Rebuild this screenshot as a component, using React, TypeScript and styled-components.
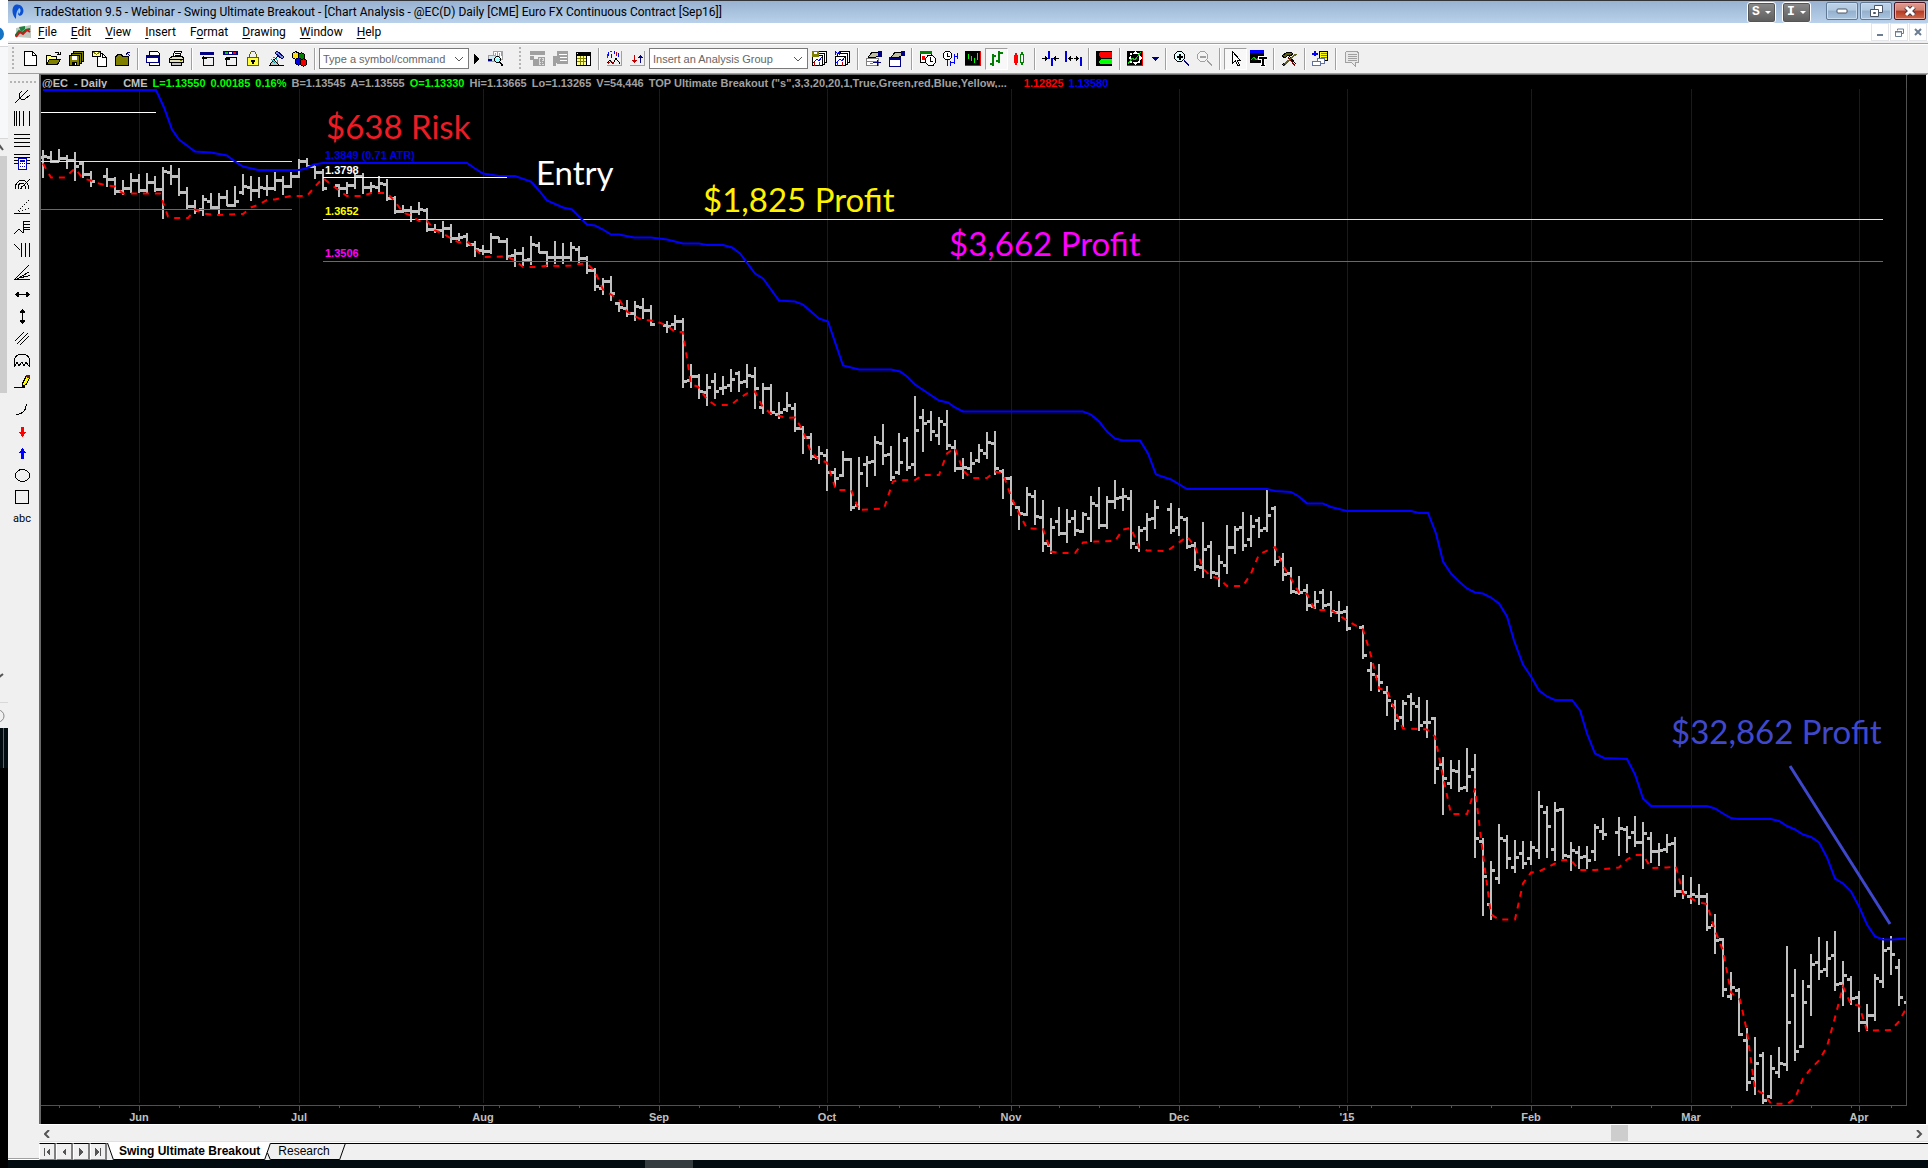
import React from 'react';
import styled, { createGlobalStyle, css } from 'styled-components';

const ui = 'Roboto, "Open Sans", sans-serif';
const arial = '"Liberation Sans", Arial, sans-serif';

const Global = createGlobalStyle`
  *, *::before, *::after { box-sizing: border-box; }
  body { margin: 0; background: #000; font-family: ${ui}; font-size: 12px; color: #000; }
  button, input, select { font: inherit; color: inherit; margin: 0; padding: 0; border: 0; background: none; border-radius: 0; }
`;

/* ---------- page frame ---------- */

const Desktop = styled.div`
  display: flex;
  align-items: stretch;
`;

const Behind = styled.div`
  flex: none;
  width: 8px;
  display: flex;
  flex-direction: column;
  background: #000;
`;

const Slice = styled.div<{ $h: number; $bg: string; $line?: boolean }>`
  height: ${(p) => p.$h}px;
  background: ${(p) => p.$bg};
  border-bottom: ${(p) => (p.$line ? '1px solid #d8d8d8' : '0')};
  overflow: hidden;
  svg { display: block; }
`;

const BehindThumb = styled.div`
  height: 237px;
  background: #cdcdcd;
  border-right: 1px solid #f0f0f0;
`;

const Main = styled.div`
  flex: 1;
  min-width: 0;
  display: flex;
  flex-direction: column;
`;

const Taskbar = styled.div`
  height: 8px;
  background: #020c10;
  display: flex;
`;
const TaskSpace = styled.div<{ $grow: number }>`
  flex: ${(p) => p.$grow} 1 0;
`;
const TaskItem = styled.div`
  width: 48px;
  background: #343c40;
`;

/* ---------- title and menu ---------- */

const TitleBar = styled.header`
  height: 23px;
  border-top: 1px solid #33333a;
  background: linear-gradient(#98b2d1, #b9d1ea);
  display: flex;
  align-items: center;
  padding: 0 2px 0 4px;
`;

const Title = styled.h1`
  flex: 1;
  margin: 0 0 0 10px;
  font-size: 12px;
  line-height: 20px;
  font-weight: 400;
  white-space: nowrap;
`;

const BadgeButton = styled.button`
  width: 29px;
  height: 21px;
  margin-right: 6px;
  border: 1px solid #fff;
  border-radius: 3px;
  background: linear-gradient(#8a8a8a, #5c5c5c);
  box-shadow: inset 0 0 0 1px #555;
  color: #fff;
  font: 700 13px/18px "Liberation Mono", monospace;
  display: flex;
  align-items: center;
  justify-content: center;
  gap: 5px;
`;

const Caret = styled.span`
  border: 3px solid transparent;
  border-top-color: currentColor;
  border-bottom-width: 0;
`;

const FrameButtons = styled.div`
  display: flex;
  gap: 2px;
  margin-left: 9px;
  align-self: flex-start;
  padding-top: 1px;
`;

const FrameButton = styled.button<{ $close?: boolean }>`
  width: 32px;
  height: 18px;
  border: 1px solid ${(p) => (p.$close ? '#4c1521' : '#5f7994')};
  border-radius: 2px;
  box-shadow: inset 0 0 0 1px ${(p) => (p.$close ? '#e9a79c' : '#c9dcef')};
  background: ${(p) =>
    p.$close
      ? 'linear-gradient(#e2998c 0, #d07f70 45%, #b33a22 50%, #cf6a4c 100%)'
      : 'linear-gradient(#bdd2e8 0, #b0c8e0 45%, #93b0cd 50%, #a9c4de 100%)'};
  display: flex;
  align-items: center;
  justify-content: center;
`;

const MenuBar = styled.nav`
  height: 20px;
  background: #fff;
  border-bottom: 2px solid #f0f0f0;
  display: flex;
  align-items: center;
  padding: 0 1px 0 7px;
`;

const MenuItem = styled.button`
  font-size: 12px;
  line-height: 18px;
  margin-left: 7px;
  padding-right: 7px;
  white-space: nowrap;
  u { text-underline-offset: 2px; }
`;

const MdiButtons = styled.div`
  display: flex;
  gap: 1px;
  margin-left: auto;
`;
const MdiButton = styled.button`
  width: 18px;
  height: 18px;
  border: 1px solid #e3e5e8;
  display: flex;
  align-items: center;
  justify-content: center;
`;

/* ---------- toolbars ---------- */

const Toolbar = styled.div`
  height: 31px;
  border-top: 1px solid #a0a0a0;
  border-bottom: 1px solid #a0a0a0;
  box-shadow: inset 0 1px 0 #fff;
  background: #f0f0f0;
  display: flex;
  align-items: center;
  padding-left: 4px;
`;

const Grip = styled.span<{ $flat?: boolean; $before?: number }>`
  flex: none;
  margin-left: ${(p) => p.$before ?? 0}px;
  ${(p) =>
    p.$flat
      ? css`
          width: 27px;
          height: 3px;
          background: repeating-linear-gradient(90deg, #b4b4b4 0 2px, transparent 2px 4px) 0 0 / 100% 2px no-repeat;
        `
      : css`
          width: 3px;
          height: 24px;
          margin-right: 4px;
          background: repeating-linear-gradient(#b4b4b4 0 2px, transparent 2px 4px) 0 0 / 2px 100% no-repeat;
        `}
`;

const Tool = styled.button<{ $narrow?: boolean; $pressed?: boolean }>`
  flex: none;
  width: ${(p) => (p.$narrow ? 15 : 23)}px;
  height: 22px;
  display: flex;
  align-items: center;
  justify-content: center;
  ${(p) =>
    p.$pressed &&
    css`
      background: #f8f8f8;
      border: 1px solid #fff;
      border-top-color: #a0a0a0;
      border-left-color: #a0a0a0;
    `}
  svg { display: block; flex: none; }
`;

const Sep = styled.span`
  flex: none;
  width: 2px;
  height: 22px;
  margin: 0 3px;
  background: #a0a0a0;
  border-right: 1px solid #fff;
`;

const Field = styled.label<{ $w: number }>`
  flex: none;
  width: ${(p) => p.$w}px;
  height: 21px;
  border: 1px solid #7a7a7a;
  background: #fff;
  display: flex;
  align-items: center;
  padding: 0 4px 0 3px;
  font: 11px/18px ${arial};
  color: #666;
  input, select {
    flex: 1;
    min-width: 0;
    appearance: none;
    outline: 0;
  }
  input::placeholder { color: #666; opacity: 1; }
  svg { flex: none; }
`;

const Body = styled.div`
  display: flex;
  align-items: stretch;
  background: #f0f0f0;
`;

const SideTools = styled.aside`
  flex: none;
  width: 31px;
  padding-top: 7px;
  display: flex;
  flex-direction: column;
  align-items: center;
  border-bottom: 1px solid #fff;
  box-shadow: inset 0 -1px 0 #a0a0a0;
`;

const SideTool = styled.button<{ $gap?: boolean }>`
  width: 24px;
  height: 22px;
  margin-top: ${(p) => (p.$gap ? 5 : 0)}px;
  margin-right: 3px;
  display: flex;
  align-items: center;
  justify-content: center;
  font: 11px/16px ${ui};
  svg { display: block; }
  ${Grip} + & { margin-top: 1px; }
`;

/* ---------- chart ---------- */

const Workspace = styled.main`
  flex: 1;
  min-width: 0;
  display: flex;
  flex-direction: column;
`;

const ChartFrame = styled.section`
  border-left: 2px solid #696969;
  border-top: 1px solid #696969;
  border-right: 2px solid #fff;
  background: #000;
`;

const Quote = styled.div`
  height: 13px;
  margin-right: 19px;
  border-right: 1px solid #555;
  display: flex;
  align-items: center;
  gap: 5px;
  padding: 3px 0 0 1px;
  font: 700 11px/12px ${arial};
  white-space: pre;
  overflow: hidden;
`;
const QuoteItem = styled.span<{ $c?: string; $after?: number }>`
  color: ${(p) => p.$c ?? '#a0a0a0'};
  margin-right: ${(p) => p.$after ?? 0}px;
`;

const Plot = styled.svg`
  display: block;
  width: 100%;
  height: auto;
`;
const Level = styled.text`
  font: 700 11px ${arial};
`;
const Note = styled.text`
  font: 400 33px Lato, Carlito, sans-serif;
`;

const ScrollBar = styled.div`
  height: 19px;
  border-top: 1px solid #fff;
  border-bottom: 1px solid #fff;
  box-shadow: inset 0 -1px 0 #e0e0e0;
  background: #f0f0f0;
  display: flex;
`;
const ScrollArrow = styled.button`
  width: 17px;
  height: 17px;
  display: flex;
  align-items: center;
  justify-content: center;
`;
const Gap = styled.div<{ $grow: number }>`
  flex: ${(p) => p.$grow} 1 0;
`;
const Thumb = styled.div`
  width: 17px;
  height: 16px;
  background: #cdcdcd;
`;

const TabRow = styled.div`
  height: 17px;
  display: flex;
  background: #f0f0f0;
`;
const TabNav = styled.button`
  width: 17px;
  height: 17px;
  border: 1px solid #fff;
  border-top-color: #000;
  border-right: 2px solid #808080;
  border-bottom: 1px solid #808080;
  display: flex;
  align-items: center;
  justify-content: center;
`;
const Tab = styled.button<{ $active?: boolean }>`
  display: flex;
  height: 17px;
  font: ${(p) => (p.$active ? 700 : 400)} 12px/16px ${arial};
  white-space: nowrap;
  svg { display: block; }
`;
const TabLabel = styled.span<{ $active?: boolean }>`
  height: 17px;
  padding: ${(p) => (p.$active ? '0 4px 0 5px' : '0 9px 0 7px')};
  background: ${(p) => (p.$active ? '#fff' : '#f0f0f0')};
  border-top: 1px solid ${(p) => (p.$active ? '#fff' : '#000')};
  border-bottom: 1px solid #000;
  line-height: 15px;
`;
const TabRest = styled.div`
  flex: 1;
  border-top: 1px solid #000;
`;

/* ---------- icons ---------- */

type Shape = [string, string, string?]; // path, fill, stroke

const Glyph = ({ s, w = 17, h = 17 }: { s: Shape[]; w?: number; h?: number }) => (
  <svg width={w} height={h} viewBox={`0 0 ${w} ${h}`} shapeRendering="crispEdges" aria-hidden="true">
    {s.map(([d, fill, stroke], i) => (
      <path key={i} d={d} fill={fill} stroke={stroke ?? 'none'} strokeWidth={1} />
    ))}
  </svg>
);

const N = 'none';
const K = '#000';
const navy = '#000080';
const grey = '#a0a0a0';

const icons: Record<string, Shape[]> = {
  page: [['M2.5 1.5H10.5L14.5 5.5V15.5H2.5Z', '#fff', K], ['M10.5 1.5V5.5H14.5', N, K]],
  open: [
    ['M1.5 14V5.5H5.5L6.5 6.5H11.5V9', '#ffff80', K],
    ['M1.5 14.5L4.5 9.5H15.5L12.5 14.5Z', '#808000', K],
    ['M9.5 3.5C11 1.5 13 1.5 14.5 4.5M12 4.5H15V2', N, K],
  ],
  saveAll: [
    ['M5.5 1.5H15.5V11.5H5.5Z', '#808000', K],
    ['M3.5 3.5H13.5V13.5H3.5Z', '#808000', K],
    ['M1.5 5.5H11.5V15.5H1.5Z', '#808000', K],
    ['M4 6H9V10H4Z', '#fff'],
    ['M4 12H9V15H4Z', K],
    ['M7 13H8V15H7Z', '#fff'],
  ],
  mailPage: [
    ['M6.5 3.5H11.5L15.5 7.5V16.5H6.5Z', '#fff', K],
    ['M11.5 3.5V7.5H15.5', N, K],
    ['M1.5 1.5H9.5V6.5H1.5Z', '#ffffa0', K],
    ['M2 2L5.5 4.5L9 2', N, '#808000'],
  ],
  folder: [
    ['M1.5 15.5V6.5H2.5L3.5 4.5H7.5L8.5 6.5H14.5V15.5Z', '#808000', K],
    ['M12.5 2.5H16M12.5 2.5V5M13 3L16 6', N, navy],
  ],
  preview: [
    ['M4.5 1.5H12.5L14.5 3.5V15.5H4.5Z', '#fff', K],
    ['M1.5 5.5H13.5V12.5H1.5Z', '#fff', navy],
    ['M1 5H14V8H1Z', navy],
  ],
  printer: [
    ['M5 6L6.5 1.5H13.5L12 6', '#fff', K],
    ['M1.5 8.5L4 6.5H14.5L15.5 8.5V12.5H1.5Z', '#e0e0c0', K],
    ['M3.5 12.5H13.5V15.5H3.5Z', '#c0c0c0', K],
    ['M7 3.5H12M6.5 5.5H11.5M1.5 9.5H15', N, K],
    ['M12 10H14V11H12Z', '#808000'],
  ],
  window: [
    ['M1 2H15V5H1Z', navy],
    ['M4 7H15V8H4ZM4 15H15V16H4ZM14 7H15V16H14Z', navy],
    ['M2 8L5 5.5V7H8V9H5V10.5Z', K],
    ['M4 9H5V15H4Z', K],
  ],
  windowRgb: [
    ['M1 1H16V5H1Z', navy],
    ['M3 2H6V4H3Z', '#0c0'],
    ['M7 2H10V4H7Z', '#fff'],
    ['M11 2H14V4H11Z', '#f00'],
    ['M4 7H15V8H4ZM4 15H15V16H4ZM14 7H15V16H14Z', K],
    ['M2 9L5 6.5V8H8V10H5V11.5Z', K],
    ['M4 10H5V15H4Z', K],
  ],
  lock: [
    ['M4.5 8V4.5L6.5 1.5H9.5L11.5 4.5V8', N, '#606000'],
    ['M2.5 7.5H13.5V15.5H2.5Z', '#ffff40', '#606000'],
    ['M7 10H9V14H7ZM6 10H10V12H6Z', K],
  ],
  satellite: [
    ['M9 1L16 7L14 9L7 3Z', '#8090d0', navy],
    ['M1.5 15.5L5.5 9.5L11.5 15.5Z', '#c0c0c0', K],
    ['M3 9L7 13M5 7.5C8 7.5 10 10 10 12.5', N, '#00a0a0'],
    ['M6 10L10 6M11.5 15.5H15.5', N, K],
  ],
  cubes: [
    ['M1.5 3.5L4.5 1.5L8.5 3.5V7.5L4.5 9.5L1.5 7.5Z', '#ffe000', K],
    ['M7.5 4.5L10.5 2.5L13.5 4.5V8.5L10.5 9.5L7.5 8.5Z', '#008000', K],
    ['M4.5 9.5L7.5 7.5L10.5 9.5V13.5L7.5 15.5L4.5 13.5Z', '#0000e0', K],
    ['M9.5 10.5L12.5 8.5L15.5 10.5V14.5L12.5 16.5L9.5 14.5Z', '#f00000', K],
  ],
  find: [
    ['M6.5 1.5H15.5V9.5H6.5Z', '#fff', grey],
    ['M8.5 3V6M10.5 2V6M12.5 3V7M14.5 2V6', N, grey],
    ['M1.5 5.5H8.5V11.5H1.5Z', '#d0e8f0', grey],
    ['M1 9H5V11H1Z', navy],
    ['M8 8H12V12H8Z', '#a0ffff'],
    ['M9.5 6.5H11.5L13.5 8.5V10.5L11.5 12.5H9.5L7.5 10.5V8.5Z', N, K],
    ['M12.5 11.5L16 15.5M12.5 12.5L15.5 16', N, K],
  ],
  dollar: [
    ['M1 1H16V5H1ZM1 6H5V10H1ZM4 9H9V16H4Z', grey],
    ['M9.5 7.5H15.5V15.5H9.5Z', '#ddd', grey],
    ['M14 9.5H11V11.5H14V13.5H11M12.5 8V15', N, grey],
  ],
  gridGrey: [
    ['M5 1H16V14H5ZM1 6H8V13H4V16H1Z', grey],
    ['M7 4.5H15M8 7.5H15M8 10.5H15', N, '#fff'],
  ],
  gridYellow: [
    ['M1 2H16V16H1Z', K],
    ['M2 6H11V15H2Z', '#ff8'],
    ['M12 6H15V15H12Z', '#fff'],
    ['M2 3H3V4H2Z', '#ff0'],
    ['M2 8.5H11M2 11.5H11M5.5 6V15M8.5 6V15', N, '#808000'],
  ],
  analysis: [
    ['M0.5 15.5H15.5V1', N, grey],
    ['M2.5 2V6M5.5 4V8M8.5 1V4M12.5 3V7', N, '#00f'],
    ['M1.5 4V8M4 1.5H6M10.5 2V6', N, '#c00000'],
    ['M1 12.5L4 10.5L7 13.5L10 8.5L14 13.5', N, K],
    ['M2 13.5L5 11L8 14', N, '#c00000'],
  ],
  swap: [
    ['M0.5 15.5H15.5V1', N, grey],
    ['M5 5H6V10H8L5.5 13L3 10H5Z', '#c00000'],
    ['M11 13V8H9L11.5 5L14 8H12V13Z', navy],
  ],
  groupSave: [
    ['M6.5 1.5H15.5V12.5H6.5Z', '#fff', K],
    ['M3.5 3.5H13.5V14.5H3.5Z', '#fff', K],
    ['M1.5 5.5H11.5V15.5H1.5Z', '#fff', K],
    ['M1 1H8V7H1Z', '#808000'],
    ['M3 2H6V4H3Z', '#fff'],
    ['M2 13L6 9L8 11L11 7', N, '#00f'],
    ['M3 15.5V12M8.5 15.5V12', N, '#c00000'],
  ],
  groupM: [
    ['M6.5 1.5H15.5V12.5H6.5Z', '#fff', K],
    ['M3.5 3.5H13.5V14.5H3.5Z', '#fff', K],
    ['M1.5 6.5H11.5V15.5H1.5Z', '#fff', K],
    ['M1.5 5V1.5L3.5 3.5L5.5 1.5V5', N, '#00f'],
    ['M2 13L6 9L8 11L11 7', N, '#00f'],
    ['M3 15.5V12M8.5 15.5V12', N, '#c00000'],
  ],
  handPanel: [
    ['M1.5 8.5H13.5V15.5H1.5Z', '#fff', '#808080'],
    ['M1 11.5H13M4.5 13H8', N, '#808080'],
    ['M3 7L7 2.5H13V6L9 8Z', '#c0c0a0', K],
    ['M13 1H17V7H13Z', navy],
    ['M8 12.5H16M12 10V15.5', N, navy],
  ],
  handWindow: [
    ['M1.5 7.5H12.5V16.5H1.5Z', '#fff', navy],
    ['M1 7H13V10H1Z', navy],
    ['M3 7L7 2.5H13V6L9 8Z', '#c0c0a0', K],
    ['M13 1H17V6H13Z', navy],
  ],
  calClock: [
    ['M1.5 2.5H12.5V12.5H1.5Z', '#fff', K],
    ['M1 1H13V4H1Z', '#008000'],
    ['M3 6H6V10H3Z', '#f00'],
    ['M9 5.5H13.5L16.5 8.5V12.5L14 15.5H9.5L6.5 12.5V8.5Z', '#fff', K],
    ['M11.5 7V11.5H14', N, K],
  ],
  clockBars: [
    ['M3.5 1.5H7.5L9.5 3.5V7.5L7.5 9.5H3.5L1.5 7.5V3.5Z', '#fff', K],
    ['M5.5 3V6H8', N, K],
    ['M5.5 10V15.5M8.5 11V16M12.5 4V14M15.5 3V9', N, '#00f'],
    ['M8 12.5H12M12 6.5H15', N, '#00f'],
  ],
  blackBars: [
    ['M0 1H16V16H0Z', K],
    ['M0 15H16V16H0ZM15 1H16V16H15Z', '#f00'],
    ['M3 4H4V9H3ZM6 6H7V11H6ZM9 8H10V13H9ZM12 3H13V10H12Z', '#0f0'],
  ],
  ohlc: [['M4 4H6V16H4ZM2 13H4V15H2ZM6 5H8V7H6ZM10 1H12V13H10ZM8 10H10V12H8ZM12 2H15V4H12Z', '#008000']],
  candles: [
    ['M4 3H6V15H4ZM3 5H7V13H3Z', '#f00'],
    ['M9.5 4.5H12.5V12.5H9.5Z', '#fff', '#008000'],
    ['M10 2H12V4H10ZM10 13H12V15H10Z', '#008000'],
  ],
  narrow: [
    ['M0 8H3V6L6 8.5L3 11V9H0ZM17 8H14V6L11 8.5L14 11V9H17Z', K],
    ['M6 1H8V9H6ZM9 8H11V16H9Z', '#0000e0'],
  ],
  widen: [
    ['M3 8.5L6 6V8H8V9H6V11ZM14 8.5L11 6V8H9V9H11V11Z', K],
    ['M0 1H2V12H0ZM15 7H17V16H15Z', '#0000e0'],
  ],
  redGreen: [
    ['M0 1H16V16H0Z', K],
    ['M3 3L5 2H16V8H5L3 6Z', '#f00'],
    ['M3 11L5 9H16V14H5L3 13Z', '#0f0'],
  ],
  arrows: [
    ['M0 1H16V16H0Z', K],
    ['M0 15H16V16H0ZM15 1H16V16H15Z', '#f00'],
    ['M8 1L11 4H5ZM8 15L11 12H5ZM1 8L4 5V11ZM15 8L12 5V11ZM3 3H5V5H3ZM11 3H13V5H11ZM3 11H5V13H3ZM11 11H13V13H11Z', '#fff'],
    ['M1 14L5 8L8 10L14 2', N, '#0d0'],
  ],
  zoomIn: [
    ['M4.5 1.5H8.5L11.5 4.5V8.5L8.5 11.5H4.5L1.5 8.5V4.5Z', '#e0ffff', K],
    ['M6 4H7V9H6ZM4 6H9V7H4Z', K, K],
    ['M11 11L16 16M11 10L16.5 15.5', N, navy],
  ],
  zoomOut: [
    ['M4.5 1.5H8.5L11.5 4.5V8.5L8.5 11.5H4.5L1.5 8.5V4.5Z', '#f4f4f4', grey],
    ['M4 6H9V7H4Z', grey, grey],
    ['M11 11L16 16M11 10L16.5 15.5', N, grey],
  ],
  pointer: [['M5.5 1.5V13.5L8.5 10.5L10.5 15.5H12.5L10.5 10.5H13.5Z', '#fff', K]],
  chartText: [
    ['M0 0H14V3H0Z', '#00f'],
    ['M0 3H14V13H0Z', K],
    ['M1 10L4 7L6 10L9 8', N, '#0c0'],
    ['M8 6H17V9H14V14H15V16H10V14H11V9H8Z', K, '#fff'],
  ],
  hammer: [
    ['M1 6L6 2H10L12 4L9 6L7 5L4 8Z', '#606000', K],
    ['M8.5 6.5L15 14M7.5 7.5L14 15', N, K],
    ['M7 8L14 15.5', N, '#800000'],
    ['M2 15.5L14.5 3.5M3 15.5L15.5 4', N, '#606020'],
    ['M2 13L4 15M1 14L3 16', N, K],
  ],
  addGrid: [
    ['M7.5 1.5H15.5V10.5H7.5Z', '#ff0', K],
    ['M9 3.5H15M9 5.5H15M9 7.5H15', N, '#808000'],
    ['M5.5 8.5H12.5V13.5H5.5Z', '#fff', '#6070a0'],
    ['M0.5 11.5H8.5V15.5H0.5Z', '#fff', '#6070a0'],
    ['M2 1H4V6H2ZM0 3H6V5H0Z', '#00f'],
  ],
  note: [
    ['M2.5 2.5L4 1.5H14.5L15.5 3.5V12.5H12V16L8.5 12.5H2.5Z', '#e8e8e8', grey],
    ['M5 4.5H14M5 6.5H14M5 8.5H14M5 10.5H14', N, grey],
  ],
};

const side: { name: string; s: Shape[]; gap?: boolean }[] = [
  { name: 'Pitchfork', s: [['M1 15L8 8M5 6V9L8 12L11 11L16 7M5 6L8 3M8 8L14 2', N, K]] },
  { name: 'Time lines', s: [['M0 1H1V16H0ZM2 1H3V16H2ZM5 1H6V16H5ZM9 1H10V16H9ZM15 1H16V16H15Z', K]] },
  { name: 'Price lines', s: [['M0 2H16V3H0ZM0 6H16V7H0ZM0 10H16V11H0ZM0 14H16V15H0Z', K]] },
  {
    name: 'Calculator',
    s: [
      ['M0 0H16V1H0ZM0 3H16V4H0ZM0 6H16V7H0ZM0 9H16V10H0Z', K],
      ['M4.5 4.5H12.5V15.5H4.5Z', '#fff', '#0000c0'],
      ['M6 6H11V8H6ZM6 9H7V10H6ZM8 9H9V10H8ZM10 9H11V10H10ZM6 12H7V13H6ZM8 12H9V13H8ZM10 12H11V13H10Z', '#0000c0'],
    ],
  },
  { name: 'Arcs', s: [['M1 13C1 7 5 4 8 4S14 7 15 13M4 13C4 9 6 7 8 7S11 9 12 13M7 13V11L8 10L9 11M6 13L16 3', N, K]] },
  { name: 'Fan', s: [['M0 15H16V16H0Z', K], ['M1.5 14.5H2M3.5 12.5H4.5M6 10.5H7M8 8.5H9M10 6.5H11M12 4.5H13M14 2.5H15M5 13.5H6M8 12.5H9M11 11.5H12M14 10.5H15', N, K]] },
  { name: 'Price extension', s: [['M0 14L5 9L9 13M9 1V13', N, K], ['M9 1H16V2H9ZM9 4H16V5H9ZM9 7H16V8H9ZM9 9H16V10H9Z', K]] },
  { name: 'Time extension', s: [['M0 2L6 8', N, K], ['M7 1H8V15H7ZM11 1H12V15H11ZM15 1H16V15H15Z', K]] },
  { name: 'Gann fan', s: [['M0 15H16V16H0Z', K], ['M1 15L15 1M3 15L15 8M3 14.5L16 11.5', N, K]] },
  { name: 'Horizontal line', s: [['M1 8H2V7H3V6H5V8H12V6H14V7H15V8H16V9H15V10H14V11H12V9H5V11H3V10H2V9H1Z', K]] },
  { name: 'Vertical line', s: [['M8 1H9V2H10V3H11V5H9V12H11V14H10V15H9V16H8V15H7V14H6V12H8V5H6V3H7V2H8Z', K]] },
  { name: 'Parallel lines', s: [['M1 11L10 2M3 14L14 3M6 15L15 6', N, K]] },
  { name: 'Cycle', s: [['M0.5 15V9C0.5 4 4 2 8 2S15.5 4 15.5 9V15M1 14L3 10L5 14L8 10L10 14L12 10L15 14', N, K]] },
  { name: 'Pencil', s: [['M0 13.5H8', N, K], ['M8.5 12.5V9.5L12.5 1.5H15.5V4.5L11.5 11.5Z', '#ff0', K], ['M12 1H16V4H13Z', '#602020'], ['M8 11H11V14H8Z', K]] },
  { name: 'Arc', gap: true, s: [['M2 13.5C8 13.5 12 10 12.5 3', N, K]] },
  { name: 'Down arrow', s: [['M7 4H10V9H12L8.5 14L5 9H7Z', '#f00']] },
  { name: 'Up arrow', s: [['M7 14H10V8H12L8.5 3L5 8H7Z', '#00f']] },
  { name: 'Ellipse', s: [['M1.5 8.5C1.5 0.5 15.5 0.5 15.5 8.5S1.5 16.5 1.5 8.5Z', N, K]] },
  { name: 'Rectangle', s: [['M1.5 1.5H14.5V14.5H1.5Z', N, K]] },
];

const Chevron = () => (
  <svg width="10" height="6" viewBox="0 0 10 6" aria-hidden="true">
    <path d="M1 1L5 5L9 1" fill="none" stroke="#555" strokeWidth="1" />
  </svg>
);

const T = ({ i, pressed }: { i: string; pressed?: boolean }) => (
  <Tool type="button" aria-label={i} $pressed={pressed}>
    <Glyph s={icons[i]} />
  </Tool>
);

/* ---------- chart data (plot units) ---------- */

// first slot, then high, low, open, close for each consecutive bar
const runs: [number, number[]][] = [
  [0, [150,178,157,156, 151,163,157,161, 149,162,161,158, 155,169,158,160, 152,181,160,166, 162,178,163,174, 171,187,174,181]],
  [8, [168,187,176,179, 177,195,179,191, 180,195,191,188, 173,193,188,180, 174,193,180,190, 173,194,190,182, 176,192,182,189, 167,219,189,171,
    165,185,172,176, 168,196,176,192, 187,209,192,206, 200,214,206,210, 195,216,209,199, 193,210,201,207, 193,214,207,197, 190,206,197,205,
    186,207,205,201, 174,195,192,186, 176,201,187,190, 177,198,190,187, 175,196,188,188, 172,191,188,180, 176,195,180,186, 172,188,186,176,
    159,178,176,161, 158,167,161,166, 166,179,166,172, 169,191,172,188]],
  [37, [184,197,185,188, 182,194,188,185, 173,189,185,176, 173,194,176,187, 182,193,187,186, 176,194,187,183, 179,201,184,198, 196,214,198,211,
    205,213,211,210, 206,222,210,211, 202,215,211,209, 208,232,210,229, 224,233,229,230, 221,238,230,228, 224,243,228,238, 233,241,238,237,
    233,247,236,244, 241,257,244,249, 245,255,250,251, 233,254,251,237, 237,243,237,241, 238,260,241,256, 249,267,255,253, 247,266,253,260,
    236,265,259,244, 242,253,245,252, 251,267,252,257, 241,264,257,257, 243,264,257,257, 242,262,257,247, 246,263,249,258, 256,274,258,270,
    268,291,270,286, 278,295,288,281, 276,301,281,293, 302,312,303,307, 300,317,308,313, 301,321,313,306, 298,319,307,310, 305,326,310,324]],
  [78, [321,333,325,326, 315,330,324,321, 318,388,321,381, 364,388,380,376, 374,399,376,391, 374,406,392,387, 373,399,381,391, 376,395,388,387,
    369,392,385,379, 371,392,373,382, 364,388,381,375, 367,409,376,388, 383,414,407,388, 384,415,388,412, 402,419,414,412, 392,412,409,405,
    403,432,408,428, 426,454,428,437, 433,460,437,456, 446,464,457,453, 449,491,455,472, 468,487,472,478, 451,477,475,459, 458,511,459,507,
    457,510,505,473, 456,487,464,462, 436,476,461,442, 424,465,443,455, 446,481,454,477, 433,475,472,462, 437,471,440,467, 396,476,464,430,
    409,452,417,423, 411,441,421,431, 417,445,435,421, 410,450,424,445, 440,472,447,468, 458,479,468,467, 452,473,468,463, 444,463,460,450,
    432,459,453,442, 431,475,443,468, 469,499,471,478, 476,516,478,503, 506,530,507,513, 487,516,514,494, 490,525,496,516, 500,552,517,543,
    518,554,545,527, 507,536,521,533, 509,543,533,521, 510,536,518,530, 512,533,531,514, 496,542,518,503, 487,529,505,525, 496,529,525,501,
    480,509,501,498, 488,511,497,496, 490,549,498,543, 526,552,547,530, 513,541,528,519, 500,529,518,507]],
  [141, [503,534,509,530, 508,536,527,517, 517,549,519,546, 542,571,545,566, 522,578,567,549, 541,579,546,572, 555,587,573,562, 525,574,565,547,
    526,554,547,529, 512,551,527,545, 515,547,539,526, 517,538,520,530, 490,532,528,515, 506,566,508,561, 553,581,559,574, 567,594,573,591,
    576,595,592,592, 584,611,590,605, 591,609,606,601, 589,610,592,605, 591,617,604,611, 601,622,612,612, 606,631,611,628]],
  [165, [625,659,627,655, 662,691,670,674, 664,692,676,682, 686,716,692,700, 700,730,705,720, 700,727,717,703, 693,721,696,703, 697,731,706,725,
    700,738,722,722, 717,784,718,768, 757,815,764,778, 760,789,783,770, 760,792,771,788, 748,792,787,776, 754,858,769,838, 838,916,841,876,
    861,920,904,870, 824,884,878,838, 835,869,840,858, 840,873,867,857, 841,869,853,863, 841,865,858,847, 791,859,850,806, 806,858,812,826,
    802,861,849,810, 808,859,809,855, 842,871,856,850, 846,869,852,857, 846,869,856,860, 824,861,851,827, 818,840,831,834]],
  [197, [817,856,832,828, 826,853,829,837, 816,847,832,842, 822,869,842,833, 832,863,838,851, 843,866,851,850, 834,853,849,844, 837,897,843,891,
    875,899,891,892, 877,904,896,894, 884,905,896,896, 893,931,896,927, 914,954,925,940, 938,997,939,989, 972,1000,996,987, 988,1036,990,1034,
    1028,1091,1040,1082, 1037,1095,1078,1063, 1052,1104,1055,1100, 1055,1099,1096,1068, 1047,1078,1072,1063, 946,1071,1064,1022,
    969,1061,995,1051, 980,1048,1046,1002, 954,1016,986,964, 937,980,962,971, 941,977,969,958, 931,991,955,984, 961,1006,983,975,
    976,1005,979,998, 991,1032,997,1022, 1004,1031,1022,1015, 974,1021,1015,978, 938,988,981,950, 936,975,948,954, 959,1006,967,997]],
];

let ranges = '';
let ticks = 'M1904 1002.5H1906';
runs.forEach(([start, v]) => {
  for (let i = 0; i < v.length; i += 4) {
    const x = 43 + 8 * (start + i / 4);
    ranges += `M${x} ${v[i]}V${v[i + 1]}`;
    ticks += `M${x - 4} ${v[i + 2] + 0.5}H${x}M${x} ${v[i + 3] + 0.5}H${x + 4}`;
  }
});

const upperBand =
  '43,89.5 156,89.5 164,107 172,129 179,139 187,145 195,151 211,152 227,155 235,161 243,166 258,169.5 299,169.5 306,168 314,164 323,162.5 467,162.5 475,168 483,173 499,175.5 515,175.5 531,181 539,190 547,200 563,207 572,209 579,216 587,224 595,225 603,229 611,234 619,234 634,237 651,237 667,239 683,243 699,243 707,244.5 723,244.5 732,247 740,253 755,273 763,278 779,300 795,301 803,304 819,318 828,321 843,365 859,369 891,369 900,371 907,376 915,384 939,400 948,402 955,407 963,411 1083,411 1091,414 1099,421 1107,431 1115,438 1123,440 1140,440 1148,453 1156,474 1171,479 1187,488.5 1267,488.5 1275,490.5 1291,491.5 1299,496 1307,503 1323,503 1331,506.5 1347,510.5 1411,510.5 1419,512.5 1428,512.5 1436,533 1443,561 1451,573 1459,581 1467,588 1475,592 1483,593 1491,597 1499,603 1507,616 1514,640 1523,664 1531,676 1539,690 1547,696 1555,699.5 1572,699.5 1580,710 1587,733 1595,753 1604,757.5 1627,758.5 1635,774 1643,798 1651,805.5 1707,805.5 1715,808 1723,813 1731,817.5 1738,818.5 1771,818.5 1779,820.5 1787,825.5 1795,829 1803,834 1811,836.5 1819,842 1827,857 1835,878 1843,883 1851,891 1859,906 1867,924 1875,936 1883,939 1893,939 1905,938';

const lowerBand =
  '43,163 51,177 65,177 75,168 83,178 91,180 99,183 107,185 115,186 123,193 160,193 168,216 171,217.5 188,217.5 195,209 203,213 215,214.5 243,213.5 251,207 259,204 267,199.5 275,199 283,197 291,195.5 307,195.5 315,186 323,177.5 331,184 339,190 347,195.5 363,195.5 371,192.5 387,192.5 395,201 403,212 411,215 419,220.5 427,220.5 435,230 443,233 451,238 459,242 467,241 475,248 483,256.5 507,256 515,260 523,266.5 539,266.5 547,265 563,265.5 571,265 579,263.5 587,263 595,271 603,289 611,294 619,299 627,311 635,316 643,319.5 651,320 659,322 667,325 675,331.5 683,331.5 691,384 698,386 707,399 715,404.5 731,404.5 739,398 747,393 755,391 763,407 771,413 787,417.5 795,417 803,430 811,452 819,459 827,462 836,489.5 851,489.5 859,509.5 884,508 893,481 899,479.5 915,479.5 923,474.5 939,474.5 947,453 955,447.5 963,470 971,477.5 987,477.5 995,471 1003,473 1011,496 1019,513 1027,528 1043,528.5 1051,551 1059,552.5 1075,552.5 1083,542 1095,541 1115,540.5 1123,529 1131,527.5 1139,547 1147,550 1167,550.5 1175,545 1187,536 1195,546 1203,568 1211,576 1219,578 1227,585.5 1243,585.5 1251,573 1259,554 1275,546.5 1283,565 1291,578 1299,592 1307,593.5 1315,609.5 1331,609.5 1347,620 1363,629 1371,655 1379,688 1387,690 1395,710 1403,728 1427,729 1435,736 1443,776 1451,813.5 1467,813.5 1475,788 1483,854 1491,914 1499,919 1515,919 1523,883 1531,872 1539,871 1555,863 1563,859.5 1571,859.5 1579,869.5 1595,869.5 1619,867 1627,859 1635,854.5 1643,854.5 1651,867.5 1667,867 1676,866 1683,893 1691,898 1699,902 1707,903.5 1715,930 1723,950 1731,992 1740,999 1747,1031 1755,1089 1763,1093 1771,1103 1787,1103.5 1795,1098 1803,1078 1811,1068 1819,1060 1827,1046 1835,1017 1843,986 1851,1004 1859,1005 1867,1030 1891,1029.5 1899,1021 1905,1010';

const months: [number, string][] = [
  [139, 'Jun'], [299, 'Jul'], [483, 'Aug'], [659, 'Sep'], [827, 'Oct'], [1011, 'Nov'],
  [1179, 'Dec'], [1347, "'15"], [1531, 'Feb'], [1691, 'Mar'], [1859, 'Apr'],
];

const weeks = [
  ...Array.from({ length: 33 }, (_, i) => 59 + 40 * i),
  ...Array.from({ length: 14 }, (_, i) => 1371 + 40 * i),
];

const levels: [number, number, number, string][] = [
  [41, 156, 112, '#fff'], [41, 292, 161, '#ff0'], [41, 292, 209, '#f0f'],
  [323, 507, 177, '#fff'], [323, 1883, 219, '#ff0'], [323, 1883, 261, '#f0f'],
];

const PriceChart = () => (
  <Plot viewBox="41 88 1885 1036" role="img" aria-label="Euro FX daily bars">
    <g shapeRendering="crispEdges">
      {months.map(([x]) => (
        <rect key={x} x={x} y={89} width={1} height={1014} fill="#1a1a1a" />
      ))}
      <path d="M41 1105.5H1906M1906.5 88V1106" stroke="#505050" />
      <path d={weeks.map((x) => `M${x}.5 1106V1108`).join('')} stroke="#505050" />
      <path d={months.map(([x]) => `M${x}.5 1106V1111`).join('')} stroke="#505050" />
      <path d={ranges} stroke="#c0c0c0" strokeWidth="2" />
      <path d={ticks} stroke="#c0c0c0" strokeWidth="3" />
      {levels.map(([a, b, y, c]) => (
        <rect key={`${a}-${y}`} x={a} y={y} width={b - a} height={1} fill={c} />
      ))}
    </g>
    <g fill="none" strokeWidth="2" transform="translate(0 0.5)">
      <polyline points={upperBand} stroke="#00f" />
      <polyline points={lowerBand} stroke="#f00" strokeDasharray="6 6" />
    </g>
    {months.map(([x, m]) => (
      <Level key={m} x={x} y={1121} fill="#c0c0c0" textAnchor="middle">{m}</Level>
    ))}
    <Level x={325} y={159} fill="#0000e0">1.3849 (0.71 ATR)</Level>
    <Level x={325} y={174} fill="#fff">1.3798</Level>
    <Level x={325} y={215} fill="#ff0">1.3652</Level>
    <Level x={325} y={257} fill="#f0f">1.3506</Level>
    <Note x={326} y={139} fill="#ed1c24">$638 Risk</Note>
    <Note x={536} y={185} fill="#fff">Entry</Note>
    <Note x={703} y={212} fill="#fff200">$1,825 Profit</Note>
    <Note x={949} y={256} fill="#f0f">$3,662 Profit</Note>
    <Note x={1671} y={744} fill="#3f48cc">$32,862 Profit</Note>
    <path d="M1790 766L1890 924" stroke="#3f48cc" strokeWidth="3" />
  </Plot>
);

const menus: [string, string, string][] = [
  ['', 'F', 'ile'], ['', 'E', 'dit'], ['', 'V', 'iew'], ['', 'I', 'nsert'],
  ['F', 'o', 'rmat'], ['', 'D', 'rawing'], ['', 'W', 'indow'], ['', 'H', 'elp'],
];

export default function App() {
  return (
    <>
      <Global />
      <Desktop>
        <Behind>
          <Slice $h={47} $bg="#fff" $line>
            <svg width="8" height="46" aria-hidden="true"><circle cx="-3" cy="34" r="7" fill="#1574c4" /></svg>
          </Slice>
          <Slice $h={92} $bg="#f7f8fa" $line />
          <Slice $h={17} $bg="#f0f0f0">
            <svg width="8" height="17" aria-hidden="true"><path d="M-2 12L0 7L3 11" fill="none" stroke="#555" strokeWidth="2" /></svg>
          </Slice>
          <BehindThumb />
          <Slice $h={310} $bg="#f0f0f0" $line>
            <svg width="8" height="309" aria-hidden="true"><path d="M-2 285L3 281" fill="none" stroke="#555" strokeWidth="2" /></svg>
          </Slice>
          <Slice $h={25} $bg="#f0f0f0">
            <svg width="8" height="25" aria-hidden="true"><circle cx="-2" cy="13" r="6" fill="none" stroke="#888" /></svg>
          </Slice>
          <Slice $h={40} $bg="#020c10">
            <svg width="8" height="40" aria-hidden="true"><path d="M3.5 0V40" stroke="#56666c" /></svg>
          </Slice>
        </Behind>
        <Main>
          <TitleBar>
            <svg width="12" height="16" viewBox="0 0 12 16" aria-hidden="true">
              <path d="M3 1C8-1 13 4 11 9C10 12 7 13 6 10L7 5C5 6 4 9 4 15C0 11-1 4 3 1Z" fill="#0a50d0" />
              <path d="M7 4C9 5 9 8 7 10C6 8 6 6 7 4Z" fill="#9fd0ff" />
            </svg>
            <Title>TradeStation 9.5 - Webinar - Swing Ultimate Breakout - [Chart Analysis - @EC(D) Daily [CME] Euro FX Continuous Contract [Sep16]]</Title>
            <BadgeButton type="button">S<Caret /></BadgeButton>
            <BadgeButton type="button">I<Caret /></BadgeButton>
            <FrameButtons>
              <FrameButton type="button" aria-label="Minimize">
                <svg width="12" height="6"><rect x="1" y="1" width="10" height="4" rx="1" fill="#fff" stroke="#4a5566" /></svg>
              </FrameButton>
              <FrameButton type="button" aria-label="Restore">
                <svg width="13" height="12" fill="#fff" stroke="#4a5566">
                  <path d="M4.5 0.5H12.5V7.5H4.5Z" /><path d="M0.5 4.5H8.5V11.5H0.5Z" /><path d="M3.5 7.5H5.5V8.5H3.5Z" />
                </svg>
              </FrameButton>
              <FrameButton type="button" aria-label="Close" $close>
                <svg width="12" height="10">
                  <path d="M2 1L10 9M10 1L2 9" stroke="#4a3a44" strokeWidth="5" /><path d="M2 1L10 9M10 1L2 9" stroke="#fff" strokeWidth="3" />
                </svg>
              </FrameButton>
            </FrameButtons>
          </TitleBar>
          <MenuBar>
            <svg width="16" height="14" viewBox="0 0 16 14" aria-hidden="true">
              <path d="M1 3L16 0V13L1 12Z" fill="#c0c8c0" />
              <path d="M4 2L10 1V4L6 7Z" fill="#208040" />
              <path d="M0 11L4 6L7 8L11 5L15 4" fill="none" stroke="#0a7a2a" strokeWidth="2" />
              <path d="M1 12L5 7L8 9L12 5L15 7" fill="none" stroke="#d01818" strokeWidth="2" />
            </svg>
            {menus.map(([a, u, b]) => (
              <MenuItem key={u + b} type="button">{a}<u>{u}</u>{b}</MenuItem>
            ))}
            <MdiButtons>
              <MdiButton type="button" aria-label="Minimize chart"><svg width="6" height="8"><path d="M0 6H6V8H0Z" fill="#6b7d93" /></svg></MdiButton>
              <MdiButton type="button" aria-label="Restore chart">
                <svg width="9" height="9" fill="none" stroke="#6b7d93"><path d="M2.5 2.5V1H8.5V5.5H7M0.5 4H6.5V8.5H0.5ZM0 3.5H7" /></svg>
              </MdiButton>
              <MdiButton type="button" aria-label="Close chart"><svg width="8" height="8"><path d="M1 1L7 7M7 1L1 7" stroke="#6b7d93" strokeWidth="2" /></svg></MdiButton>
            </MdiButtons>
          </MenuBar>
          <Toolbar>
            <Grip />
            <T i="page" /><T i="open" /><T i="saveAll" /><T i="mailPage" /><T i="folder" /><Sep />
            <T i="preview" /><T i="printer" /><Sep />
            <T i="window" /><T i="windowRgb" /><T i="lock" /><T i="satellite" /><T i="cubes" /><Sep />
            <Field $w={150}><input type="text" aria-label="Symbol or command" placeholder="Type a symbol/command" /><Chevron /></Field>
            <Tool type="button" aria-label="Run" $narrow><Glyph w={6} h={10} s={[['M0 0L5 5L0 10Z', K]]} /></Tool>
            <T i="find" />
            <Grip $before={12} />
            <T i="dollar" /><T i="gridGrey" /><T i="gridYellow" /><Sep />
            <T i="analysis" /><T i="swap" />
            <Field $w={159}><select aria-label="Analysis group"><option>Insert an Analysis Group</option></select><Chevron /></Field>
            <T i="groupSave" /><T i="groupM" /><Sep />
            <T i="handPanel" /><T i="handWindow" /><Sep />
            <T i="calClock" /><T i="clockBars" /><T i="blackBars" /><T i="ohlc" pressed /><T i="candles" /><Sep />
            <T i="narrow" /><T i="widen" /><Sep />
            <T i="redGreen" /><Sep />
            <T i="arrows" />
            <Tool type="button" aria-label="More" $narrow><Glyph w={8} h={4} s={[['M0 0H8L4 4Z', navy]]} /></Tool><Sep />
            <T i="zoomIn" /><T i="zoomOut" /><Sep />
            <T i="pointer" pressed /><T i="chartText" /><Sep />
            <T i="hammer" /><Sep />
            <T i="addGrid" /><Sep />
            <T i="note" />
          </Toolbar>
          <Body>
            <SideTools>
              <Grip $flat />
              {side.map((t) => (
                <SideTool key={t.name} type="button" aria-label={t.name} $gap={t.gap}><Glyph s={t.s} /></SideTool>
              ))}
              <SideTool type="button">abc</SideTool>
            </SideTools>
            <Workspace>
              <ChartFrame>
                <Quote>
                  <QuoteItem $c="#c0c0c0" $after={11}>@EC  - Daily</QuoteItem>
                  <QuoteItem $c="#c0c0c0">CME</QuoteItem>
                  <QuoteItem $c="#0f0">L=1.13550</QuoteItem>
                  <QuoteItem $c="#0f0">0.00185</QuoteItem>
                  <QuoteItem $c="#0f0">0.16%</QuoteItem>
                  <QuoteItem>B=1.13545</QuoteItem>
                  <QuoteItem>A=1.13555</QuoteItem>
                  <QuoteItem $c="#0f0">O=1.13330</QuoteItem>
                  <QuoteItem>Hi=1.13665</QuoteItem>
                  <QuoteItem>Lo=1.13265</QuoteItem>
                  <QuoteItem>V=54,446</QuoteItem>
                  <QuoteItem $after={12}>TOP Ultimate Breakout ("s",3,3,20,20,1,True,Green,red,Blue,Yellow,...</QuoteItem>
                  <QuoteItem $c="#f00">1.12825</QuoteItem>
                  <QuoteItem $c="#00f">1.13580</QuoteItem>
                </Quote>
                <PriceChart />
              </ChartFrame>
              <ScrollBar>
                <ScrollArrow type="button" aria-label="Scroll left"><svg width="7" height="8"><path d="M5 0L1 4L5 8" fill="none" stroke="#555" strokeWidth="2" /></svg></ScrollArrow>
                <Gap $grow={1553} />
                <Thumb />
                <Gap $grow={283} />
                <ScrollArrow type="button" aria-label="Scroll right"><svg width="7" height="8"><path d="M1 0L5 4L1 8" fill="none" stroke="#555" strokeWidth="2" /></svg></ScrollArrow>
              </ScrollBar>
              <TabRow>
                <TabNav type="button" aria-label="First tab"><Glyph w={7} h={8} s={[['M0 0H1V8H0ZM6 0V8L2 4Z', '#555']]} /></TabNav>
                <TabNav type="button" aria-label="Previous tab"><Glyph w={5} h={8} s={[['M4 0V8L0 4Z', '#555']]} /></TabNav>
                <TabNav type="button" aria-label="Next tab"><Glyph w={5} h={8} s={[['M0 0V8L4 4Z', '#555']]} /></TabNav>
                <TabNav type="button" aria-label="Last tab"><Glyph w={7} h={8} s={[['M5 0H6V8H5ZM0 0V8L4 4Z', '#555']]} /></TabNav>
                <Tab type="button" $active>
                  <svg width="7" height="17"><path d="M0 0H7V17H6Z" fill="#fff" /><path d="M0.5 0L6.5 17" stroke="#000" /></svg>
                  <TabLabel $active>Swing Ultimate Breakout</TabLabel>
                  <svg width="7" height="17"><path d="M0 0H6L0 17Z" fill="#fff" /><path d="M6.5 0L0.5 17M3.5 10L6.5 17" stroke="#000" /></svg>
                </Tab>
                <Tab type="button">
                  <TabLabel>Research</TabLabel>
                  <svg width="7" height="17"><path d="M0 0.5H7M6.5 0L0.5 17" stroke="#000" /></svg>
                </Tab>
                <TabRest />
              </TabRow>
            </Workspace>
          </Body>
          <Taskbar>
            <TaskSpace $grow={637} />
            <TaskItem />
            <TaskSpace $grow={1235} />
          </Taskbar>
        </Main>
      </Desktop>
    </>
  );
}
